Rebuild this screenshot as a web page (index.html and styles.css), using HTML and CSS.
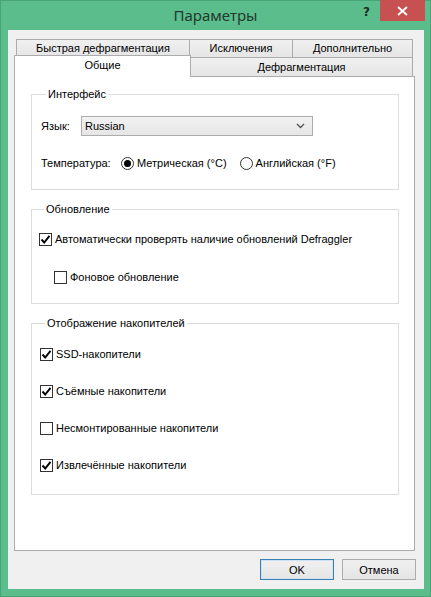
FILE: index.html
```html
<!DOCTYPE html>
<html lang="ru">
<head>
<meta charset="utf-8">
<title>Параметры</title>
<link rel="stylesheet" href="styles.css">
</head>
<body>
<div class="window">
  <div class="titlebar">
    <div></div>
    <div class="title">Параметры</div>
    <div class="caption-btns">
      <span class="help">?</span>
      <span class="close"><svg width="11" height="10" viewBox="0 0 11 10"><path d="M1 1 L10 9 M10 1 L1 9" stroke="#fff" stroke-width="1.8" fill="none"/></svg></span>
    </div>
  </div>
  <div class="client">
    <div class="tabctl">
      <div class="tabrow back">
        <div class="tab t1">Быстрая дефрагментация</div>
        <div class="tab t2">Исключения</div>
        <div class="tab t3">Дополнительно</div>
      </div>
      <div class="tabrow front">
        <div class="tab sel">Общие</div>
        <div class="tab t4">Дефрагментация</div>
      </div>
      <div class="panel">
        <div class="group g1">
          <div class="gtitle">Интерфейс</div>
          <div class="row lang">
            <span class="lbl">Язык:</span>
            <div class="select"><span>Russian</span><svg width="9" height="6" viewBox="0 0 9 6"><path d="M1 1 L4.5 4.5 L8 1" stroke="#555" stroke-width="1.4" fill="none"/></svg></div>
          </div>
          <div class="row temp">
            <span class="lbl">Температура:</span>
            <span class="radio on"></span><span class="rtext">Метрическая (°C)</span>
            <span class="radio r2"></span><span class="rtext">Английская (°F)</span>
          </div>
        </div>
        <div class="group g2">
          <div class="gtitle">Обновление</div>
          <div class="row chk c1"><span class="cb on"><svg width="11" height="11" viewBox="0 0 11 11"><path d="M1.5 5.5 L4.2 8.5 L9.5 1.8" stroke="#000" stroke-width="1.9" fill="none"/></svg></span>Автоматически проверять наличие обновлений Defraggler</div>
          <div class="row chk c2 indent"><span class="cb"></span>Фоновое обновление</div>
        </div>
        <div class="group g3">
          <div class="gtitle">Отображение накопителей</div>
          <div class="row chk d1"><span class="cb on"><svg width="11" height="11" viewBox="0 0 11 11"><path d="M1.5 5.5 L4.2 8.5 L9.5 1.8" stroke="#000" stroke-width="1.9" fill="none"/></svg></span>SSD-накопители</div>
          <div class="row chk dn"><span class="cb on"><svg width="11" height="11" viewBox="0 0 11 11"><path d="M1.5 5.5 L4.2 8.5 L9.5 1.8" stroke="#000" stroke-width="1.9" fill="none"/></svg></span>Съёмные накопители</div>
          <div class="row chk dn"><span class="cb"></span>Несмонтированные накопители</div>
          <div class="row chk dn"><span class="cb on"><svg width="11" height="11" viewBox="0 0 11 11"><path d="M1.5 5.5 L4.2 8.5 L9.5 1.8" stroke="#000" stroke-width="1.9" fill="none"/></svg></span>Извлечённые накопители</div>
        </div>
      </div>
    </div>
    <div class="buttons">
      <button class="btn default">OK</button>
      <button class="btn">Отмена</button>
    </div>
  </div>
</div>
</body>
</html>
```
FILE: styles.css
```css
* { box-sizing: border-box; }
html, body { margin: 0; padding: 0; }
body {
  width: 431px;
  height: 597px;
  overflow: hidden;
  font-family: "Liberation Sans", Arial, sans-serif;
  font-size: 11px;
  color: #000;
}
.window {
  width: 431px;
  height: 597px;
  background: #5bbd8c;
  border: 1px solid #49a477;
  display: flex;
  flex-direction: column;
}
.titlebar {
  height: 30px;
  display: grid;
  grid-template-columns: 1fr auto 1fr;
  align-items: start;
}
.title {
  font-family: "Noto Sans", "Open Sans", sans-serif;
  font-size: 15px;
  color: #223a2e;
  padding-top: 4px;
  line-height: 20px;
}
.caption-btns {
  display: flex;
  justify-content: flex-end;
  align-items: flex-start;
  margin-right: 5px;
}
.help {
  font-family: "DejaVu Sans", sans-serif;
  font-weight: bold;
  font-size: 12px;
  color: #1d2d25;
  margin-top: 4px;
  margin-right: 10px;
}
.close {
  width: 45px;
  height: 21px;
  margin-top: -1px;
  background: #c75050;
  display: flex;
  align-items: center;
  justify-content: center;
}
.client {
  flex: 1;
  margin: 0 6px 7px 7px;
  background: #f0f0f0;
  padding: 9px 9px 9px 6px;
  display: flex;
  flex-direction: column;
}
.tabctl {
  width: 401px;
  display: flex;
  flex-direction: column;
}
.tabrow {
  display: flex;
}
.tabrow.back {
  height: 18px;
  margin: 0 2px;
}
.tabrow.front {
  height: 19px;
  align-items: flex-end;
  margin-right: 2px;
}
.tab {
  border: 1px solid #acacac;
  border-bottom: none;
  background: linear-gradient(#f0f0f0, #e5e5e5);
  text-align: center;
  line-height: 16px;
  white-space: nowrap;
}
.t1 { width: 174px; }
.t2 { width: 104px; margin-left: -1px; }
.t3 { width: 121px; margin-left: -1px; }
.tab.sel {
  width: 177px;
  height: 22px;
  margin-bottom: -1px;
  background: #fff;
  position: relative;
  z-index: 2;
  line-height: 19px;
}
.t4 {
  flex: 1;
  height: 19px;
  margin-left: -1px;
  line-height: 18px;
}
.panel {
  height: 475px;
  background: #fff;
  border: 1px solid #acacac;
  padding: 17px 15px 0 16px;
}
.group {
  border: 1px solid #dcdcdc;
}
.gtitle {
  display: table;
  margin: -7px 0 0 5px;
  padding: 0 2px;
  background: #fff;
  line-height: 13px;
}
.g1 { height: 96px; padding: 0 9px; }
.g2 { height: 95px; margin-top: 19px; padding: 0 7px; }
.g3 { height: 172px; margin-top: 19px; padding: 0 8px; }
.row {
  display: flex;
  align-items: center;
}
.lang { height: 20px; margin-top: 15px; }
.lang .lbl { width: 40px; }
.select {
  width: 232px;
  height: 20px;
  border: 1px solid #acacac;
  background: linear-gradient(#f2f2f2, #e6e6e6);
  display: flex;
  align-items: center;
  justify-content: space-between;
  padding: 0 7px 0 3px;
}
.temp { height: 20px; margin-top: 17px; }
.temp .lbl { width: 80px; }
.radio {
  width: 13px;
  height: 13px;
  border: 1px solid #333;
  border-radius: 50%;
  background: #fff;
  display: flex;
  align-items: center;
  justify-content: center;
  margin-right: 3px;
}
.radio.on::after {
  content: "";
  width: 7px;
  height: 7px;
  border-radius: 50%;
  background: #000;
}
.r2 { margin-left: 13px; }
.chk { height: 16px; }
.cb {
  width: 13px;
  height: 13px;
  border: 1px solid #333;
  background: #fff;
  margin-right: 3px;
  display: flex;
  align-items: center;
  justify-content: center;
  flex-shrink: 0;
}
.c1 { margin-top: 15px; }
.c2 { margin-top: 22px; }
.indent { padding-left: 15px; }
.d1 { margin-top: 16px; }
.dn { margin-top: 21px; }
.buttons {
  display: flex;
  justify-content: flex-end;
  gap: 8px;
  margin-top: 8px;
  margin-right: -1px;
}
.btn {
  width: 74px;
  height: 21px;
  font-family: inherit;
  font-size: 11px;
  color: #000;
  border: 1px solid #acacac;
  background: linear-gradient(#f0f0f0, #e5e5e5);
  padding: 0;
  border-radius: 0;
}
.btn.default {
  border-color: #3c7fb1;
  box-shadow: inset 0 0 0 1px #cfe2f3;
}
```
